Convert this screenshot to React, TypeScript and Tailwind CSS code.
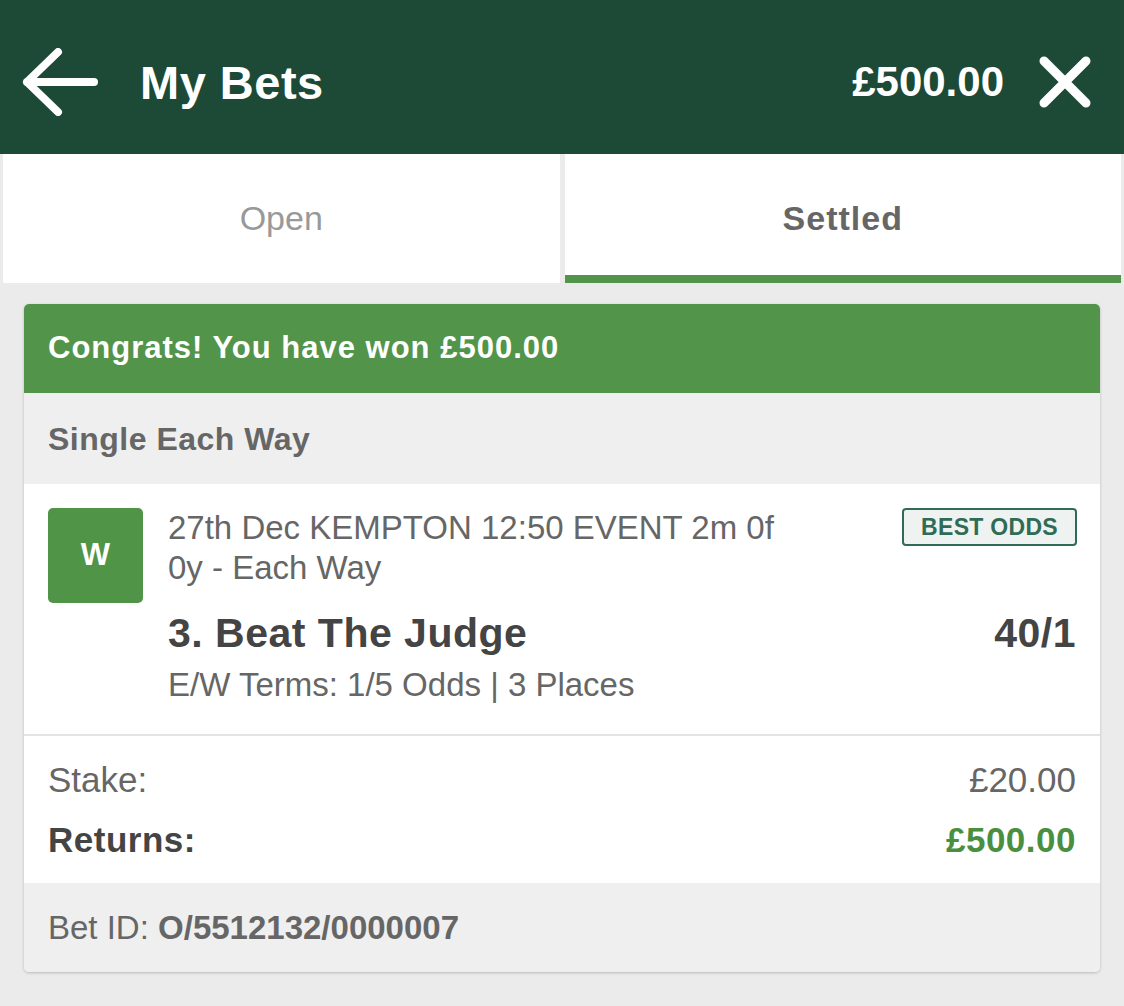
const FONT = { fontFamily: '"Liberation Sans", Arial, Helvetica, sans-serif' };

function BackArrow() {
  return (
    <svg width="80" height="68" viewBox="0 0 80 68" fill="none" className="shrink-0">
      <path
        d="M5 34H72M36 4L5 34L36 64"
        stroke="#ffffff"
        strokeWidth="8"
        strokeLinecap="round"
        strokeLinejoin="round"
      />
    </svg>
  );
}

function CloseIcon() {
  return (
    <svg width="56" height="56" viewBox="0 0 56 56" fill="none" className="shrink-0">
      <path d="M7 7L49 49M49 7L7 49" stroke="#ffffff" strokeWidth="9" strokeLinecap="round" />
    </svg>
  );
}

function Header() {
  return (
    <header className="flex h-[154px] items-center bg-[#1d4a36] pt-[10px] pl-[22px] pr-[31px] text-white">
      <BackArrow />
      <h1 className="ml-[38px] text-[47px] font-bold leading-none tracking-[0.5px]">My Bets</h1>
      <span className="ml-auto text-[42px] font-bold leading-none">£500.00</span>
      <span className="ml-[33px]">
        <CloseIcon />
      </span>
    </header>
  );
}

function Tabs() {
  return (
    <div className="flex h-[129px] gap-[5px] bg-[#ebebeb] px-[3px]">
      <div className="flex flex-1 items-center justify-center bg-white text-[34px] text-[#999999]">Open</div>
      <div className="flex flex-1 items-center justify-center bg-white text-[34px] font-bold tracking-[1px] text-[#666666] shadow-[inset_0_-8px_0_#52944a]">
        Settled
      </div>
    </div>
  );
}

function Selection() {
  return (
    <div className="flex pt-[24px] pb-[29px] pl-[24px] pr-[23px]">
      <div className="flex h-[95px] w-[95px] shrink-0 items-center justify-center rounded-[5px] bg-[#4f9447] text-[31px] font-bold text-white">
        W
      </div>
      <div className="ml-[25px] flex-1">
        <div className="flex items-start justify-between">
          <p className="w-[625px] text-[33px] leading-[40px] text-[#666666]">
            27th Dec KEMPTON 12:50 EVENT 2m 0f 0y - Each Way
          </p>
          <span className="flex h-[38px] shrink-0 items-center rounded-[4px] border-2 border-[#2f6b55] bg-[#eef3f1] px-[17px] text-[23px] font-bold tracking-[0.3px] text-[#2f6b55]">
            BEST ODDS
          </span>
        </div>
        <div className="mt-[21px] flex items-center justify-between text-[41px] font-bold leading-[48px] tracking-[0.5px] text-[#444444]">
          <span>3. Beat The Judge</span>
          <span className="pr-[1px]">40/1</span>
        </div>
        <p className="mt-[8px] text-[33px] leading-[40px] text-[#666666]">E/W Terms: 1/5 Odds | 3 Places</p>
      </div>
    </div>
  );
}

function BetCard() {
  return (
    <div className="mx-[24px] mt-[21px] overflow-hidden rounded-[5px] bg-white shadow-[0_1px_3px_rgba(0,0,0,0.22)]">
      <div className="flex h-[89px] items-center bg-[#52944a] px-[24px] text-[31px] font-bold tracking-[1px] text-white">
        Congrats! You have won £500.00
      </div>
      <div className="flex h-[91px] items-center bg-[#efefef] px-[24px] text-[32px] font-bold tracking-[0.5px] text-[#666666]">
        Single Each Way
      </div>
      <Selection />
      <div className="border-t-2 border-[#e4e4e4] px-[24px] pt-[14px] pb-[13px] text-[35px] leading-[60px]">
        <div className="flex justify-between text-[#666666]">
          <span>Stake:</span>
          <span>£20.00</span>
        </div>
        <div className="flex justify-between font-bold tracking-[0.5px]">
          <span className="text-[#444444]">Returns:</span>
          <span className="text-[#4a8f3f]">£500.00</span>
        </div>
      </div>
      <div className="flex h-[89px] items-center bg-[#efefef] px-[24px] text-[33px] text-[#666666]">
        Bet ID:&nbsp;<span className="font-bold">O/5512132/0000007</span>
      </div>
    </div>
  );
}

export default function App() {
  return (
    <div style={FONT} className="min-h-[1006px] w-full bg-[#ebebeb]">
      <Header />
      <Tabs />
      <BetCard />
    </div>
  );
}
